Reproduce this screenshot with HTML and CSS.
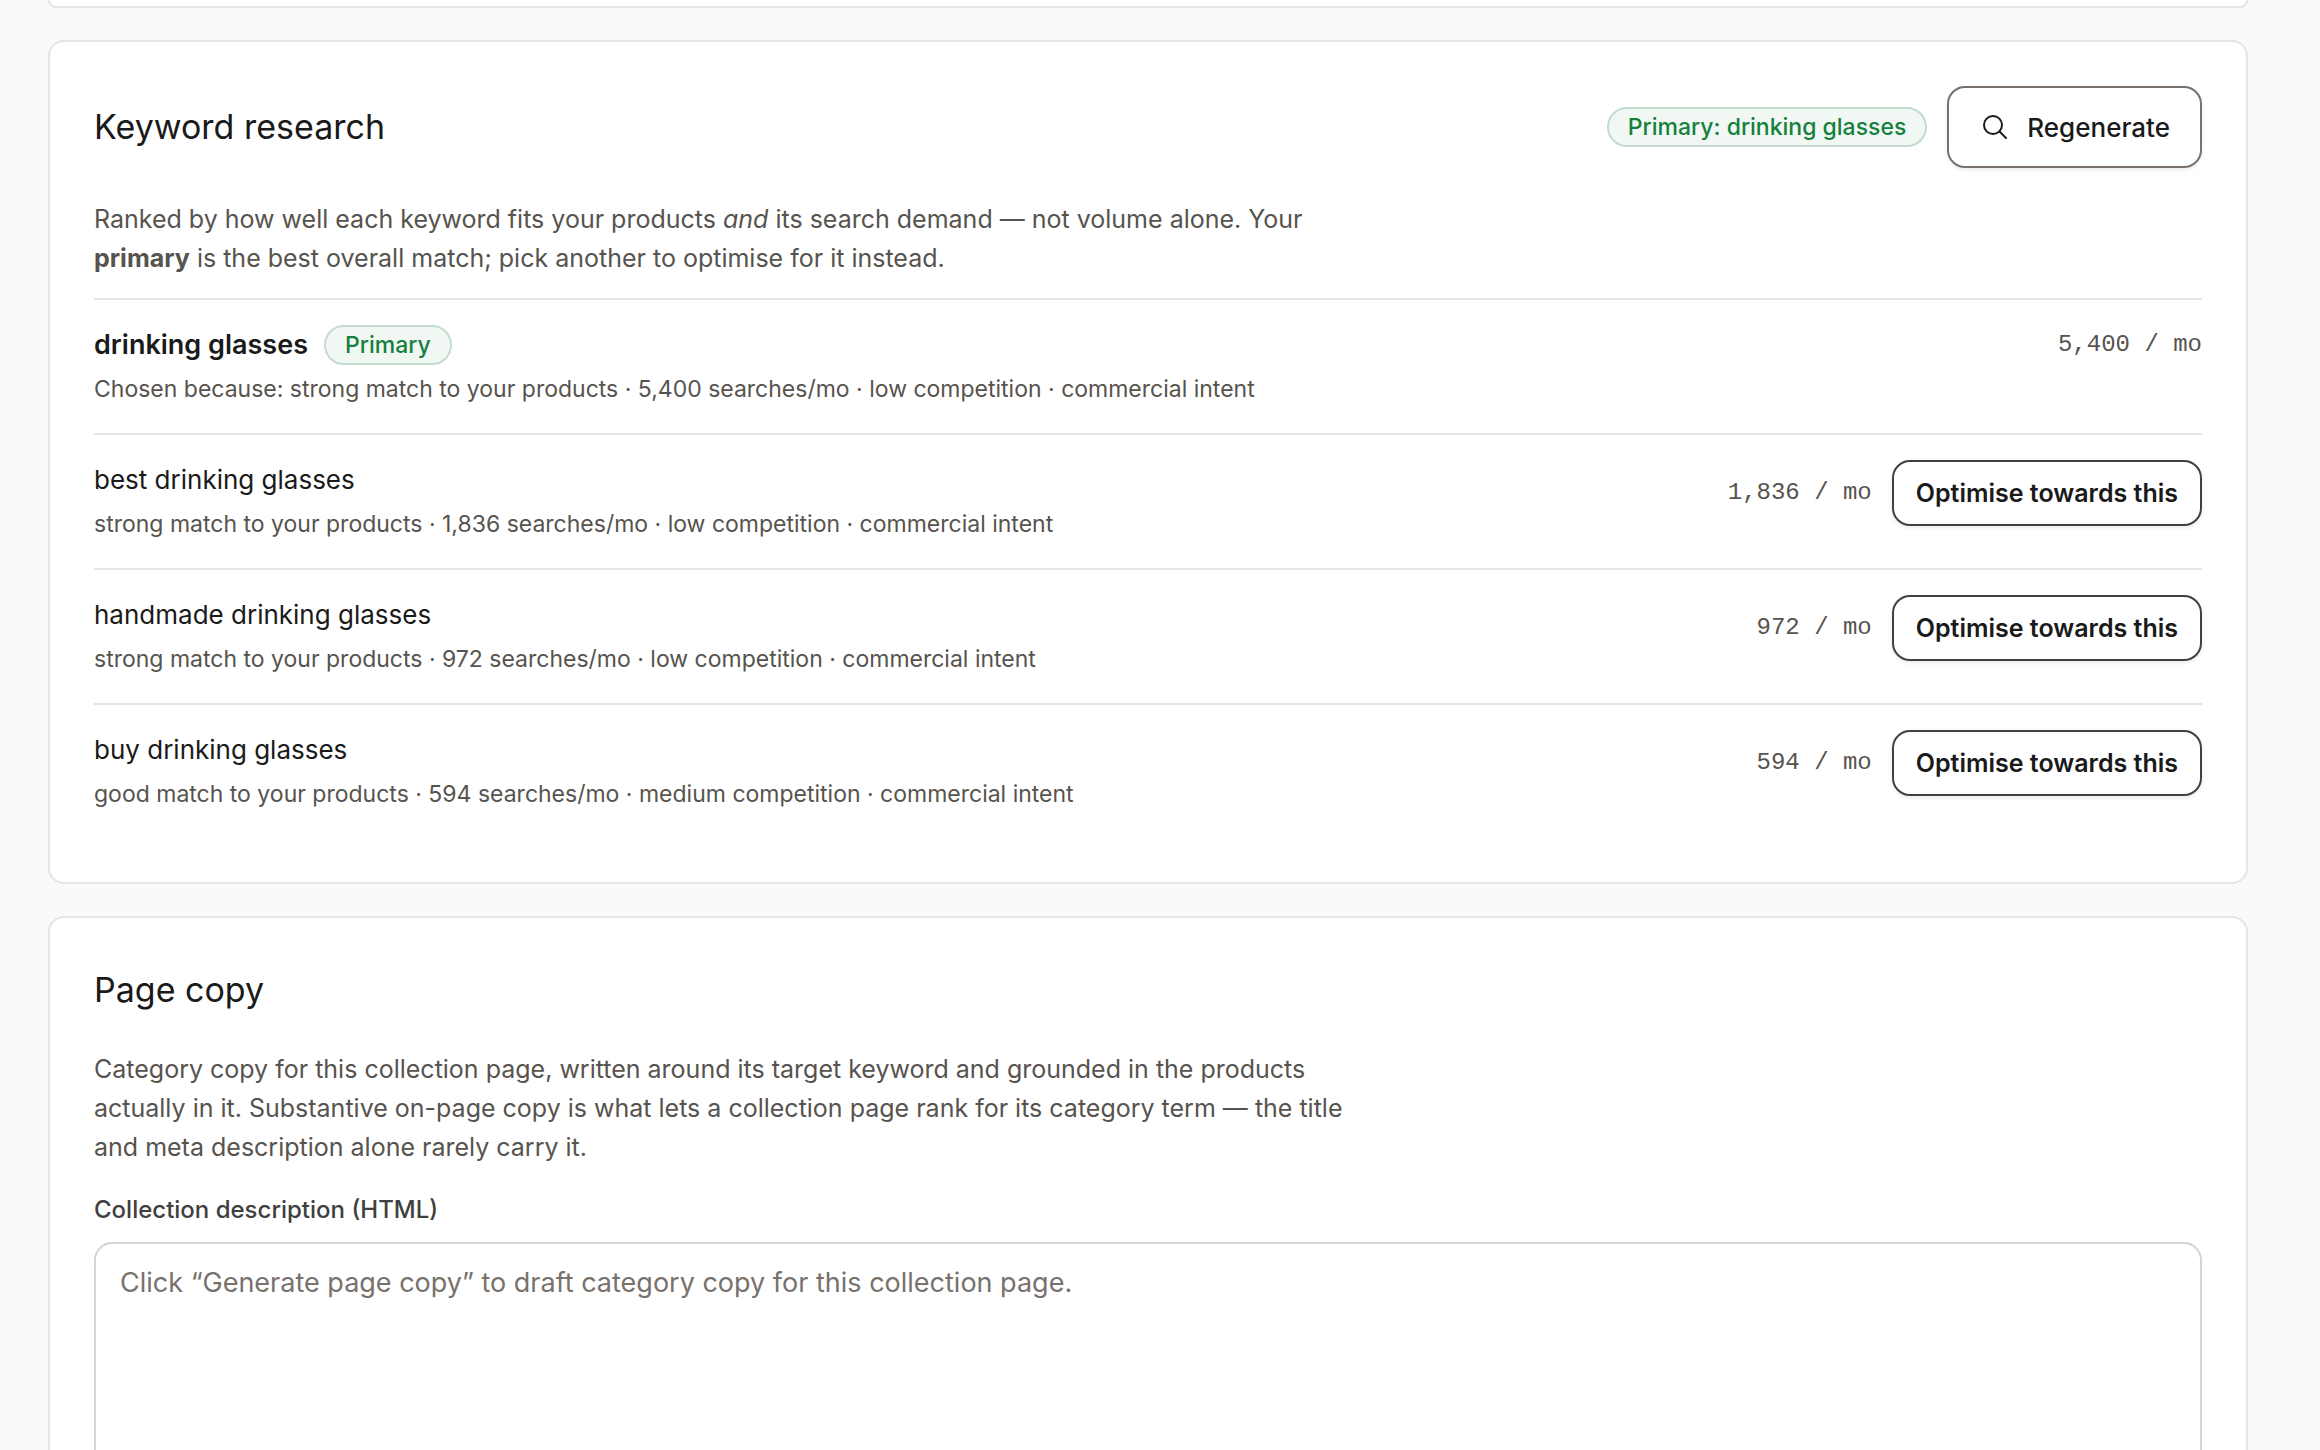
FILE: index.html
```
<!DOCTYPE html>
<html lang="en">
<head>
    <meta charset="UTF-8">
    <meta name="viewport" content="width=device-width, initial-scale=1.0">
    <title>Keyword research</title>
    <link rel="stylesheet" href="styles.css">
</head>
<body>
    <main class="page">
        <div class="card card-end"></div>

        <section class="card">
            <div class="card-header">
                <h2>Keyword research</h2>
                <div class="actions">
                    <span class="badge">Primary: drinking glasses</span>
                    <button type="button" class="btn btn-regenerate">
                        <svg class="icon" viewBox="0 0 24 24" fill="none" stroke="currentColor" stroke-width="2" stroke-linecap="round" aria-hidden="true">
                            <circle cx="10" cy="10" r="9"></circle>
                            <path d="M16.5 16.5L23 23"></path>
                        </svg>
                        Regenerate
                    </button>
                </div>
            </div>
            <p class="description">Ranked by how well each keyword fits your products <em>and</em> its search demand — not volume alone. Your <strong>primary</strong> is the best overall match; pick another to optimise for it instead.</p>
            <ul class="keywords">
                <li class="keyword">
                    <div>
                        <div class="name name-primary">drinking glasses <span class="badge">Primary</span></div>
                        <div class="reason">Chosen because: strong match to your products · 5,400 searches/mo · low competition · commercial intent</div>
                    </div>
                    <div class="actions">
                        <span class="volume">5,400 / mo</span>
                    </div>
                </li>
                <li class="keyword">
                    <div>
                        <div class="name">best drinking glasses</div>
                        <div class="reason">strong match to your products · 1,836 searches/mo · low competition · commercial intent</div>
                    </div>
                    <div class="actions">
                        <span class="volume">1,836 / mo</span>
                        <button type="button" class="btn btn-optimise">Optimise towards this</button>
                    </div>
                </li>
                <li class="keyword">
                    <div>
                        <div class="name">handmade drinking glasses</div>
                        <div class="reason">strong match to your products · 972 searches/mo · low competition · commercial intent</div>
                    </div>
                    <div class="actions">
                        <span class="volume">972 / mo</span>
                        <button type="button" class="btn btn-optimise">Optimise towards this</button>
                    </div>
                </li>
                <li class="keyword">
                    <div>
                        <div class="name">buy drinking glasses</div>
                        <div class="reason">good match to your products · 594 searches/mo · medium competition · commercial intent</div>
                    </div>
                    <div class="actions">
                        <span class="volume">594 / mo</span>
                        <button type="button" class="btn btn-optimise">Optimise towards this</button>
                    </div>
                </li>
            </ul>
        </section>

        <section class="card">
            <div class="card-header">
                <h2>Page copy</h2>
            </div>
            <p class="description">Category copy for this collection page, written around its target keyword and grounded in the products actually in it. Substantive on-page copy is what lets a collection page rank for its category term — the title and meta description alone rarely carry it.</p>
            <label class="field-label" for="collectionDescription">Collection description (HTML)</label>
            <textarea id="collectionDescription" class="field" rows="12" placeholder="Click “Generate page copy” to draft category copy for this collection page."></textarea>
        </section>
    </main>
</body>
</html>
```
FILE: styles.css
```
* {
    box-sizing: border-box;
}
body {
    margin: 0;
    font-family: Inter, "Liberation Sans", sans-serif;
    font-size: 25px;
    background: #fafafa;
    color: #1a1a1a;
}
.page {
    display: flex;
    flex-direction: column;
    gap: 32px;
    padding: 0 72px 32px 48px;
}
.card {
    padding: 44px;
    background: #fff;
    border: 2px solid #e5e5e5;
    border-radius: 16px;
}
.card-end {
    height: 8px;
    padding: 0;
    border-top: none;
    border-radius: 0 0 16px 16px;
}
.card-header {
    display: flex;
    justify-content: space-between;
    align-items: center;
}
h2 {
    margin: 0;
    font-size: 34px;
    font-weight: 400;
    line-height: 56px;
}
.actions {
    display: flex;
    align-items: center;
    gap: 20px;
    flex-shrink: 0;
}
.badge {
    display: inline-flex;
    align-items: center;
    height: 40px;
    padding: 0 19px;
    border: 2px solid #c3dccd;
    border-radius: 20px;
    background: #f1f8f4;
    color: #15803d;
    font-size: 23px;
    font-weight: 500;
}
.btn {
    display: inline-flex;
    align-items: center;
    justify-content: center;
    background: #fff;
    color: #1a1a1a;
    font-family: inherit;
    cursor: pointer;
    box-shadow: 0 2px 4px rgba(0, 0, 0, 0.08);
}
.btn-regenerate {
    gap: 20px;
    height: 82px;
    padding: 0 30px 0 34px;
    border: 2px solid #78716c;
    border-radius: 18px;
    font-size: 26px;
    font-weight: 500;
}
.btn-optimise {
    height: 66px;
    padding: 0 22px;
    border: 2px solid #44403c;
    border-radius: 18px;
    font-size: 25px;
    font-weight: 600;
}
.icon {
    width: 24px;
    height: 24px;
}
.description {
    max-width: 1280px;
    margin: 32px 0 20px;
    color: #57534e;
    line-height: 39px;
}
.keywords {
    margin: 0;
    padding: 0;
    list-style: none;
}
.keyword {
    display: flex;
    justify-content: space-between;
    align-items: flex-start;
    gap: 24px;
    padding: 25px 0 24px;
    border-top: 2px solid #e5e5e5;
}
.name {
    display: flex;
    align-items: center;
    gap: 16px;
    margin-bottom: 4px;
    font-size: 26px;
    line-height: 40px;
}
.name-primary {
    font-size: 27px;
    font-weight: 600;
}
.reason {
    color: #57534e;
    font-size: 23px;
    line-height: 40px;
}
.volume {
    color: #57534e;
    font-family: "Liberation Mono", monospace;
    font-size: 24px;
    line-height: 40px;
}
.field-label {
    display: block;
    margin-bottom: 9px;
    color: #404040;
    font-size: 24px;
    font-weight: 500;
    line-height: 46px;
}
.field {
    display: block;
    width: 100%;
    padding: 18px 24px;
    border: 2px solid #d4d4d4;
    border-radius: 18px;
    background: #fff;
    color: #1a1a1a;
    font-family: inherit;
    font-size: 27px;
    line-height: 42px;
    resize: vertical;
}
.field::placeholder {
    color: #78716c;
}
```
